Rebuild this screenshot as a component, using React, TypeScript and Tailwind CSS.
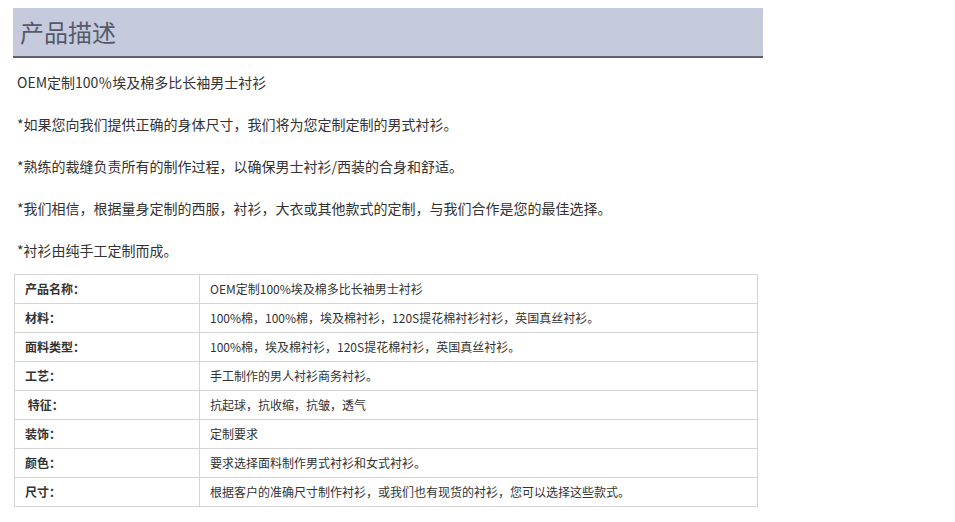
export default function App() {
  const paras = [
    "OEM定制100％埃及棉多比长袖男士衬衫",
    "*如果您向我们提供正确的身体尺寸，我们将为您定制定制的男式衬衫。",
    "*熟练的裁缝负责所有的制作过程，以确保男士衬衫/西装的合身和舒适。",
    "*我们相信，根据量身定制的西服，衬衫，大衣或其他款式的定制，与我们合作是您的最佳选择。",
    "*衬衫由纯手工定制而成。",
  ];
  const rows: [string, string][] = [
    ["产品名称：", "OEM定制100%埃及棉多比长袖男士衬衫"],
    ["材料：", "100%棉，100%棉，埃及棉衬衫，120S提花棉衬衫衬衫，英国真丝衬衫。"],
    ["面料类型：", "100%棉，埃及棉衬衫，120S提花棉衬衫，英国真丝衬衫。"],
    ["工艺：", "手工制作的男人衬衫商务衬衫。"],
    [" 特征：", "抗起球，抗收缩，抗皱，透气"],
    ["装饰：", "定制要求"],
    ["颜色：", "要求选择面料制作男式衬衫和女式衬衫。"],
    ["尺寸：", "根据客户的准确尺寸制作衬衫，或我们也有现货的衬衫，您可以选择这些款式。"],
  ];
  return (
    <div className="w-[955px] h-[522px] bg-white text-[#333] text-[14px]" style={{ fontFamily: '"Microsoft YaHei","Noto Sans CJK SC",sans-serif' }}>
      <div className="pt-2 pl-[13px]">
        <div className="w-[750px] h-[50px] bg-[#c5cbdc] border-b-2 border-[#5d6070] pl-[7px] flex items-center text-[24px] text-[#555a6a]">产品描述</div>
      </div>
      <div className="pl-[17px] pt-[14px]">
        {paras.map((p) => (
          <div key={p} className="h-[42px] leading-[20px]">{p}</div>
        ))}
      </div>
      <div className="pl-[14px] -mt-[8px]">
        <table className="w-[744px] border-collapse border border-[#d4d4d4] text-[12px]">
          <tbody>
            {rows.map(([a, b]) => (
              <tr key={a} className="h-[29px]">
                <td className="w-[185px] border border-[#d4d4d4] pl-[10px] font-bold whitespace-pre">{a}</td>
                <td className="border border-[#d4d4d4] pl-[10px]">{b}</td>
              </tr>
            ))}
          </tbody>
        </table>
      </div>
    </div>
  );
}
